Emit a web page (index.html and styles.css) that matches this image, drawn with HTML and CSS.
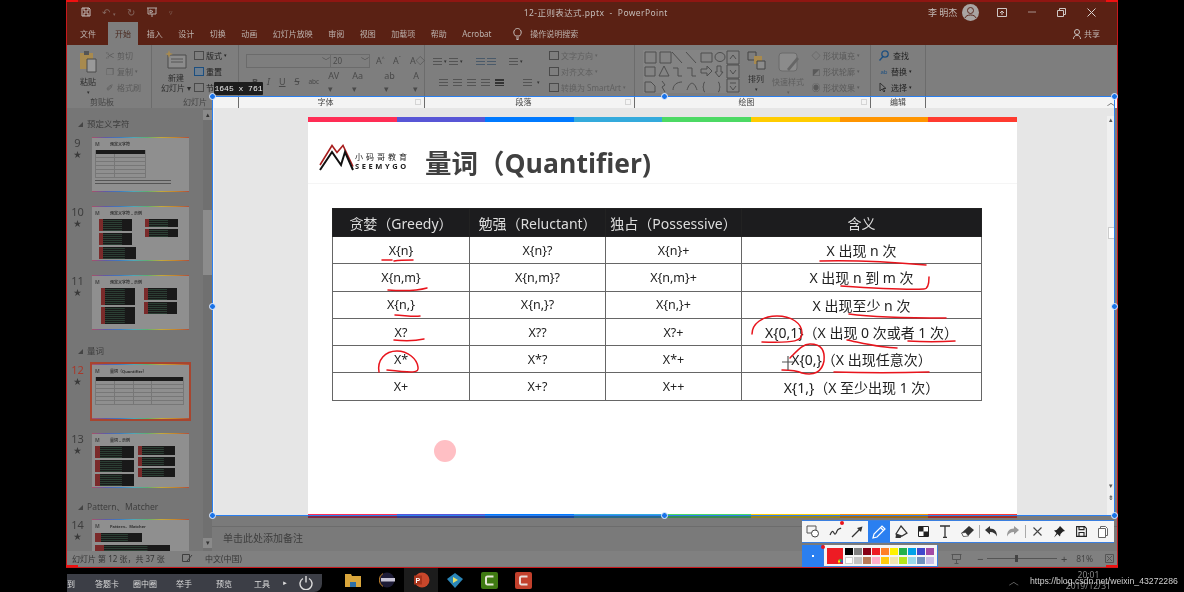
FILE: index.html
```html
<!DOCTYPE HTML>
<html lang="en">
  <head>
    <title>12-正则表达式.pptx - PowerPoint</title>
    <meta charset="utf-8">
    <link rel="stylesheet" href="styles.css">
  </head>
  <body>
  <div class="screen">

    <div class="app">
      <div class="titlebar">
        <div class="quick">
          <svg width="10" height="10" viewBox="0 0 10 10"><path d="M1 1h7l1 1v7H1zM3 1v3h4V1M3 9V6h4v3" fill="none" stroke="#c9c2bf"/></svg>
          <span class="q-undo">↶ <small>▾</small></span>
          <span class="q-redo">↻</span>
          <svg width="12" height="10" viewBox="0 0 12 10"><path d="M1 1h10M2 1v6h8V1M6 7v3M4 3l3 1.5L4 6z" fill="none" stroke="#b5aca8"/></svg>
          <span class="q-drop">▿</span>
        </div>
        <div class="doc-title">12-正则表达式.pptx &nbsp;-&nbsp; PowerPoint</div>
        <div class="account">
          <span class="user">李 明杰</span>
          <svg class="avatar" width="17" height="17" viewBox="0 0 17 17"><circle cx="8.5" cy="8.5" r="8.5" fill="#a9a4a2"/><circle cx="8.5" cy="6.5" r="3" fill="none" stroke="#5b2a20"/><path d="M3 14c1-4 10-4 11 0" fill="none" stroke="#5b2a20"/></svg>
          <svg class="win-btn" width="10" height="9" viewBox="0 0 10 9"><path d="M.5.5h9v8h-9zM3 5l2-2 2 2M5 3v4" fill="none" stroke="#cfc8c5"/></svg>
          <svg class="win-btn" width="8" height="8" viewBox="0 0 8 8"><path d="M0 4h8" stroke="#a5918b"/></svg>
          <svg class="win-btn" width="9" height="9" viewBox="0 0 9 9"><path d="M.5 2.5h6v6h-6zM2.5 2.5v-2h6v6h-2" fill="none" stroke="#cfc8c5"/></svg>
          <svg class="win-btn" width="9" height="9" viewBox="0 0 9 9"><path d="M.5.5l8 8M8.5.5l-8 8" stroke="#d8d2cf"/></svg>
        </div>
      </div>

      <div class="tabs">
        <span class="tab tab-file">文件</span>
        <span class="tab active">开始</span>
        <span class="tab">插入</span>
        <span class="tab">设计</span>
        <span class="tab">切换</span>
        <span class="tab">动画</span>
        <span class="tab">幻灯片放映</span>
        <span class="tab">审阅</span>
        <span class="tab">视图</span>
        <span class="tab">加载项</span>
        <span class="tab">帮助</span>
        <span class="tab">Acrobat</span>
        <svg class="bulb" width="9" height="12" viewBox="0 0 9 12"><path d="M2.5 8C-1 4.500 1.500 .5 4.500 .5S10 4.500 6.500 8zM3 10h3M3.500 11.500h2" fill="none" stroke="#c9c2bf"/></svg>
        <span class="tab search">操作说明搜索</span>
        <span class="share">
          <svg width="9" height="10" viewBox="0 0 9 10"><circle cx="4" cy="3" r="2.500" fill="none" stroke="#c9c2bf"/><path d="M.5 10c0-5 7-5 7 0" fill="none" stroke="#c9c2bf"/></svg>
          共享
        </span>
      </div>

      <div class="ribbon">
        <div class="group g-clip">
          <div class="g-body">
            <div class="big-btn">
              <svg width="18" height="23" viewBox="0 0 18 23"><path d="M1 3h13v16H1z" fill="#a88a4e"/><path d="M5 1h5v4H5z" fill="#555"/><path d="M8 9h9v13H8z" fill="#999" stroke="#4a4a4a"/></svg>
              <span>粘贴</span>
              <small>▾</small>
            </div>
            <div class="stack s-clip faded">
              <span><i class="mini">✂</i>剪切</span>
              <span><i class="mini">❐</i>复制 <small>▾</small></span>
              <span><i class="mini">✐</i>格式刷</span>
            </div>
          </div>
          <div class="g-label">剪贴板</div>
        </div>

        <div class="group g-slides">
          <div class="g-body">
            <div class="big-btn new-slide">
              <svg width="22" height="19" viewBox="0 0 22 19"><path d="M3 5h18v13H3z" fill="#8b8b8b" stroke="#4a4a4a"/><path d="M6 9h12M6 12h12" stroke="#555"/><path d="M4 0l1 3 3 1-3 1-1 3-1-3-3-1 3-1z" fill="#a88a4e"/></svg>
              <span>新建</span>
              <span>幻灯片 ▾</span>
            </div>
            <div class="stack s-slides">
              <span><i class="box"></i>版式 <small>▾</small></span>
              <span><i class="box box-blue"></i>重置</span>
              <span><i class="box"></i>节</span>
            </div>
          </div>
          <div class="g-label label-split">幻灯片</div>
        </div>

        <div class="group g-font">
          <div class="g-body g-col">
            <div class="font-row">
              <div class="combo c-font">﹀</div>
              <div class="combo c-size"><span>20</span>﹀</div>
              <span class="f-btn">A<sup>^</sup></span>
              <span class="f-btn">A<sup>ˇ</sup></span>
              <span class="f-btn">A◇</span>
            </div>
            <div class="font-row row-2">
              <b>B</b><i>I</i><u>U</u><s>S</s><span class="abc">abc</span><span>AV ▾</span><span>Aa ▾</span><span class="pen">ab ▾</span><span class="big-a">A ▾</span>
            </div>
          </div>
          <div class="g-label g-launch">字体<i class="launch"></i></div>
        </div>

        <div class="group g-para">
          <div class="g-body">
            <div class="para-left">
              <div class="para-row">
                <i class="lines"></i><small>▾</small><i class="lines"></i><small>▾</small><i class="sp"></i><i class="lines blue"></i><i class="lines blue"></i><i class="sp"></i><i class="lines"></i><small>▾</small>
              </div>
              <div class="para-row row-b">
                <i class="lines"></i><i class="lines"></i><i class="lines"></i><i class="lines"></i><i class="lines dark"></i><i class="sp"></i><i class="lines"></i><small>▾</small>
              </div>
            </div>
            <div class="stack s-para faded">
              <span><i class="box"></i>文字方向 <small>▾</small></span>
              <span><i class="box"></i>对齐文本 <small>▾</small></span>
              <span><i class="box"></i>转换为 SmartArt <small>▾</small></span>
            </div>
          </div>
          <div class="g-label g-launch">段落<i class="launch"></i></div>
        </div>

        <div class="group g-draw">
          <div class="g-body">
            <svg class="gallery" width="97" height="43" viewBox="0 0 97 43">
              <rect width="97" height="43" fill="#848484"/>
              <g fill="none" stroke="#4e4e4e">
                <path d="M2 2h11v11H2zM17 2h11v11H17zM29 2l10 11M43 2l10 11M58 3h11v9H58z"/><ellipse cx="77" cy="7" rx="5" ry="4.500"/>
                <path d="M2 17h10v9H2zM21 16l5 10H16zM30 18h5v8h4M44 18h5v8h4M58 19h6v-3l5 5-5 5v-3h-6zM74 16h4v6h2l-4 5-4-5h2z"/>
                <path d="M2 32h6l4 4v6H2zM19 31l3 4-3 2 3 5M30 40c0-5 4-8 9-8M44 40c3-9 7-9 10 0M62 32c-2 0-1 4-2 5 1 1 0 5 2 5M75 32c2 0 1 4 2 5-1 1 0 5-2 5"/>
                <path d="M84 1h12v13H84zM84 15h12v13H84zM84 29h12v13H84zM87 9l3-4 3 4M87 20l3 4 3-4M87 33h6M87 36l3 4 3-4"/>
              </g>
            </svg>
            <div class="big-btn arrange">
              <svg width="19" height="19" viewBox="0 0 19 19"><path d="M1 1h8v8H1z" fill="none" stroke="#444"/><path d="M7 5h8v8H7z" fill="#a88a4e"/><path d="M10 10h8v8h-8z" fill="#8b8b8b" stroke="#444"/></svg>
              <span>排列</span>
              <small>▾</small>
            </div>
            <div class="big-btn quick-style faded">
              <svg width="21" height="21" viewBox="0 0 21 21"><rect x="1" y="1" width="18" height="18" rx="3" fill="#8b8b8b" stroke="#6a6a6a"/><path d="M9 17l10-12 2 2-10 12z" fill="#666"/></svg>
              <span>快速样式</span>
              <small>▾</small>
            </div>
            <div class="stack s-draw faded">
              <span><i class="mini">◇</i>形状填充 <small>▾</small></span>
              <span><i class="mini">◩</i>形状轮廓 <small>▾</small></span>
              <span><i class="mini">◉</i>形状效果 <small>▾</small></span>
            </div>
          </div>
          <div class="g-label g-launch">绘图<i class="launch"></i></div>
        </div>

        <div class="group g-edit">
          <div class="g-body">
            <div class="stack s-edit">
              <span><svg width="10" height="11" viewBox="0 0 10 11"><circle cx="6" cy="4" r="3.200" fill="none" stroke="#1c4f80" stroke-width="1.300"/><path d="M4 6.500L.5 10.500" stroke="#1c4f80" stroke-width="1.300"/></svg>查找</span>
              <span><i class="mini ab">ab</i>替换 <small>▾</small></span>
              <span><svg width="8" height="11" viewBox="0 0 8 11"><path d="M1 1v8l2-2 2 3 1-1-2-2.500h3z" fill="none" stroke="#333"/></svg>选择 <small>▾</small></span>
            </div>
          </div>
          <div class="g-label">编辑</div>
        </div>

        <div class="group g-rest">
          <div class="g-body"></div>
          <div class="g-label"><span class="collapse">︿</span></div>
        </div>
      </div>

      <div class="main">
        <div class="pane">
          <div class="pane-list">
            <div class="section"><i></i>预定义字符</div>
            <div class="item">
              <div class="num">9<span>★</span></div>
              <div class="thumb">
                <div class="t-head"><em>M</em>预定义字符</div>
                <div class="t-table"></div>
                <div class="t-note"></div>
              </div>
            </div>
            <div class="item">
              <div class="num">10<span>★</span></div>
              <div class="thumb">
                <div class="t-head"><em>M</em>预定义字符 – 示例</div>
                <div class="t-code">
                  <div class="t-col"><i class="c-a"></i><i class="c-a"></i><i class="c-b"></i></div>
                  <div class="t-col"><i class="c-c"></i><i class="c-c"></i></div>
                </div>
              </div>
            </div>
            <div class="item">
              <div class="num">11<span>★</span></div>
              <div class="thumb">
                <div class="t-head"><em>M</em>预定义字符 – 示例</div>
                <div class="t-code t-wide">
                  <div class="t-col"><i class="c-d"></i><i class="c-d"></i></div>
                  <div class="t-col"><i class="c-e"></i><i class="c-e"></i></div>
                </div>
              </div>
            </div>
            <div class="section"><i></i>量词</div>
            <div class="item current">
              <div class="num">12<span>★</span></div>
              <div class="thumb">
                <div class="t-head"><em>M</em>量词（Quantifier）</div>
                <div class="t-table t-table-wide"></div>
              </div>
            </div>
            <div class="item">
              <div class="num">13<span>★</span></div>
              <div class="thumb">
                <div class="t-head"><em>M</em>量词 – 示例</div>
                <div class="t-code t-thirteen">
                  <div class="t-col"><i class="c-f"></i><i class="c-f"></i><i class="c-f"></i></div>
                  <div class="t-col"><i class="c-g"></i><i class="c-g"></i><i class="c-g"></i></div>
                </div>
              </div>
            </div>
            <div class="section sec-last"><i></i>Pattern、Matcher</div>
            <div class="item">
              <div class="num">14<span>★</span></div>
              <div class="thumb">
                <div class="t-head"><em>M</em>Pattern、Matcher</div>
                <div class="t-code t-col-one"><i class="c-h"></i><i class="c-i"></i></div>
              </div>
            </div>
          </div>
          <div class="pane-scroll">
            <span class="sb-btn">▴</span>
            <span class="sb-thumb"></span>
            <span class="sb-btn sb-down">▾</span>
          </div>
        </div>

        <div class="work">
          <div class="edit">
            <div class="slide">
              <div class="rainbow"></div>
              <div class="slide-head">
                <div class="logo">
                  <svg width="35" height="27" viewBox="0 0 35 27">
                    <path d="M1 21L13 1.500l5 7 6-7 10 21" fill="none" stroke="#a81e1e" stroke-width="1.600"/>
                    <path d="M1 26L13 8l9 13 4-13 8 18" fill="none" stroke="#111" stroke-width="2"/>
                  </svg>
                  <div class="logo-text">
                    <span class="logo-cn">小码哥教育</span>
                    <span class="logo-en">SEEMYGO</span>
                  </div>
                </div>
                <h1>量词（Quantifier)</h1>
              </div>
              <table class="quant">
                <tr><th>贪婪（Greedy）</th><th>勉强（Reluctant）</th><th>独占（Possessive）</th><th>含义</th></tr>
                <tr><td>X{n}</td><td>X{n}?</td><td>X{n}+</td><td>X 出现 n 次</td></tr>
                <tr><td>X{n,m}</td><td>X{n,m}?</td><td>X{n,m}+</td><td>X 出现 n 到 m 次</td></tr>
                <tr><td>X{n,}</td><td>X{n,}?</td><td>X{n,}+</td><td>X 出现至少 n 次</td></tr>
                <tr><td>X?</td><td>X??</td><td>X?+</td><td>X{0,1}（X 出现 0 次或者 1 次）</td></tr>
                <tr><td>X*</td><td>X*?</td><td>X*+</td><td>X{0,}（X 出现任意次）</td></tr>
                <tr><td>X+</td><td>X+?</td><td>X++</td><td>X{1,}（X 至少出现 1 次）</td></tr>
              </table>
              <div class="rainbow rainbow-foot"></div>
            </div>
            <div class="edit-scroll">
              <span>▴</span>
              <i></i>
              <span class="es-down">▾</span>
              <span>⇟</span>
            </div>
          </div>
          <div class="rainbow-dim"></div>
          <div class="notes">单击此处添加备注</div>
        </div>
      </div>

      <div class="status">
        <span class="st-count">幻灯片 第 12 张，共 37 张</span>
        <svg class="st-spell" width="11" height="9" viewBox="0 0 11 9"><path d="M.5.5h7v7h-7zM5 7l5-6" fill="none" stroke="#3e3e3e"/></svg>
        <span class="st-lang">中文(中国)</span>
        <div class="st-right">
          <svg width="11" height="9" viewBox="0 0 11 9"><path d="M.5.5h4.500l.5 1 .5-1h4.500v8h-10zM5.500 1v8" fill="none" stroke="#555"/></svg>
          <svg class="st-show" width="11" height="10" viewBox="0 0 11 10"><path d="M.5.5h10M1.500.5v5h8v-5M5.500 5.500v4M3.500 9.500h4" fill="none" stroke="#555"/></svg>
          <span class="zoom-btn">−</span>
          <div class="zoom-track"><i></i></div>
          <span class="zoom-btn">+</span>
          <span class="zoom-val">81%</span>
          <svg width="9" height="9" viewBox="0 0 9 9"><path d="M.5.500h8v8h-8zM2 2l5 5M7 2L2 7" fill="none" stroke="#555"/></svg>
        </div>
      </div>
    </div>

    <div class="taskbar">
      <div class="class-tools">
        <span class="ct-cut">到</span>
        <span class="ct-card">答题卡</span>
        <span class="ct-ring">圈中圈</span>
        <span class="ct-hand">举手</span>
        <span class="ct-view">预览</span>
        <span class="ct-tool">工具</span>
        <span class="ct-play">►</span>
        <svg width="14" height="14" viewBox="0 0 14 14"><path d="M4 2.500a6 6 0 1 0 6 0M7 0v6.500" fill="none" stroke="#ddd" stroke-width="1.400"/></svg>
      </div>
      <div class="apps">
        <span class="app-icon"><svg width="16" height="14" viewBox="0 0 16 14"><path d="M0 1h6l1 2h9v11H0z" fill="#d9a63c"/><path d="M5 9h6v5H5z" fill="#2d6fa8"/></svg></span>
        <span class="app-icon"><svg width="17" height="16" viewBox="0 0 17 16"><circle cx="8" cy="8" r="7.500" fill="#1d1b36"/><path d="M4 1.500a7.500 7.500 0 0 0 0 13" fill="none" stroke="#c9862c"/><path d="M2 6h14v3.500H2z" fill="#c9c6d8"/></svg></span>
        <span class="app-icon on"><svg width="17" height="16" viewBox="0 0 17 16"><circle cx="9" cy="8" r="7.500" fill="#c9472b"/><path d="M1 3.500h8v9H1z" fill="#a8341c"/><text x="2.500" y="11" font-size="7" font-family="Liberation Sans" font-weight="bold" fill="#fff">P</text></svg></span>
        <span class="app-icon"><svg width="16" height="15" viewBox="0 0 16 15"><path d="M8 0l8 6-8 9-8-9z" fill="#2b86b8"/><path d="M6 4l5 3-5 3z" fill="#e7e36b"/></svg></span>
        <span class="app-icon"><svg width="17" height="17" viewBox="0 0 17 17"><rect width="17" height="17" rx="2" fill="#3f7a12"/><path d="M12.500 4.500h-6a1.500 1.500 0 0 0-1.500 1.500v5a1.500 1.500 0 0 0 1.500 1.500h6" fill="none" stroke="#e7e7d8" stroke-width="2"/></svg></span>
        <span class="app-icon"><svg width="17" height="17" viewBox="0 0 17 17"><rect width="17" height="17" rx="2" fill="#c2402c"/><path d="M12.500 4.500h-6a1.500 1.500 0 0 0-1.500 1.500v5a1.500 1.500 0 0 0 1.500 1.500h6" fill="none" stroke="#eadcd8" stroke-width="2"/></svg></span>
      </div>
      <div class="tray">
        <span class="tray-up">︿</span>
        <div class="clock"><span>20:01</span><span>2019/12/31</span></div>
      </div>
    </div>

    <!-- things drawn on top of the captured screen -->
    <div class="size-tip">1645 x 761</div>
    <div class="selection">
      <i class="h h-tl"></i><i class="h h-tc"></i><i class="h h-tr"></i>
      <i class="h h-ml"></i><i class="h h-mr"></i>
      <i class="h h-bl"></i><i class="h h-bc"></i><i class="h h-br"></i>
    </div>
    <i class="corner c1"></i><i class="corner c2"></i><i class="corner c3"></i><i class="corner c4"></i>

    <svg class="ink" width="1184" height="592" viewBox="0 0 1184 592">
      <g fill="none" stroke="#e8141c" stroke-width="1.500" stroke-linecap="round">
        <path d="M382 260l10 0M394 261c6-1 13-1 19-1"/>
        <path d="M388 290c14 1 28 1 39-2"/>
        <path d="M395 315c8 0 17 2 25 1"/>
        <path d="M394 340c10 1 21 1 30-1"/>
        <path d="M379 372c-2-12 6-21 18-21 11 0 20 8 21 16 1 6-4 6-31 3"/>
        <path d="M820 261c36-1 72 1 106 4"/>
        <path d="M841 286c30 2 60 4 83 3 4 0 5-6 5-12"/>
        <path d="M849 314c30 4 64 4 97 4"/>
        <path d="M752 334c0-10 10-18 25-18 14 0 25 7 25 17 0 8-6 10-40 9"/>
        <path d="M847 340c15 3 34 8 50 8"/>
        <path d="M908 341c15 1 32 1 47 0"/>
        <path d="M782 370c8 0 14 0 20 3 12 3 20-1 22-12 1-10-2-17-14-17-7 0-12 6-20 14"/>
        <path d="M834 372c32 1 64 1 95 0"/>
      </g>
      <path d="M782 362h11M788 356v14" fill="none" stroke="#555" stroke-width="1.200"/>
      <circle cx="445" cy="451" r="11" fill="#ffbfc4"/>
    </svg>

    <div class="draw-bar">
      <div class="tool"><svg width="14" height="13" viewBox="0 0 14 13"><path d="M1 1h9v7H1z" fill="none" stroke="#555"/><circle cx="9" cy="8.500" r="3.500" fill="#fff" stroke="#444"/></svg></div>
      <div class="tool t-dot"><svg width="13" height="10" viewBox="0 0 13 10"><path d="M1 8c2-5 3-4 4-2s2 1 3-2 3-2 4-3" fill="none" stroke="#333" stroke-width="1.200"/></svg></div>
      <div class="tool"><svg width="12" height="12" viewBox="0 0 12 12"><path d="M1 11L9 3" stroke="#333" stroke-width="1.300"/><path d="M11.500.5L10 6 6 2z" fill="#333"/></svg></div>
      <div class="tool tool-on"><svg width="14" height="14" viewBox="0 0 14 14"><path d="M1 13l1-4 8-8 3 3-8 8zM8.500 2.500l3 3" fill="none" stroke="#fff" stroke-width="1.200"/></svg></div>
      <div class="tool"><svg width="13" height="14" viewBox="0 0 13 14"><path d="M6 1l6 7-5 3-6-2z" fill="none" stroke="#333" stroke-width="1.200"/><path d="M1 9l-.5 4h5L7 11z" fill="#333"/></svg></div>
      <div class="tool"><svg width="11" height="11" viewBox="0 0 11 11"><path d="M.5.500h10v10H.500z" fill="#fff" stroke="#222"/><path d="M1 1h4.500v4.500H1zM5.500 5.500H10V10H5.500z" fill="#222"/></svg></div>
      <div class="tool"><svg width="12" height="13" viewBox="0 0 12 13"><path d="M1 1h10M6 1v12M4 12.500h4" fill="none" stroke="#333" stroke-width="1.300"/></svg></div>
      <div class="tool"><svg width="13" height="11" viewBox="0 0 13 11"><path d="M8 0l5 4-6 6-5 .5L.500 7z" fill="#333"/><path d="M.500 7l4-.5 3 3.500-5 .5z" fill="#fff" stroke="#333" stroke-width=".6"/></svg></div>
      <i class="tool-sep"></i>
      <div class="tool"><svg width="12" height="11" viewBox="0 0 12 11"><path d="M0 4l5-4v2.500c5 0 7 3 7 8-1.500-3-3.500-4.500-7-4.500V8.500z" fill="#333"/></svg></div>
      <div class="tool tool-off"><svg width="12" height="11" viewBox="0 0 12 11"><path d="M12 4L7 0v2.500c-5 0-7 3-7 8 1.500-3 3.500-4.500 7-4.500V8.500z" fill="#999"/></svg></div>
      <i class="tool-sep"></i>
      <div class="tool"><svg width="9" height="9" viewBox="0 0 9 9"><path d="M.5.500l8 8M8.500.500l-8 8" stroke="#444" stroke-width="1.100"/></svg></div>
      <div class="tool"><svg width="12" height="12" viewBox="0 0 12 12"><path d="M7 0l5 5-2 .5-2.500 2.500-.5 2.500-2.500-2.500L1 11.500 3.500 7 1 4.500 3.500 4 6 1.500z" fill="#222"/></svg></div>
      <div class="tool"><svg width="11" height="11" viewBox="0 0 11 11"><path d="M.6.600h8l1.800 1.800v8H.6zM3 .6v3h5v-3M3 10.400V6.500h5v3.900" fill="none" stroke="#222" stroke-width="1.100"/></svg></div>
      <div class="tool"><svg width="10" height="12" viewBox="0 0 10 12"><path d="M2.500 2.500V.5h5l2 2v7h-2M.5 2.500h7v9h-7z" fill="#fff" stroke="#666"/></svg></div>
    </div>
    <div class="color-bar">
      <div class="pen-size"><i></i></div>
      <div class="palette">
        <div class="current-color"><i></i></div>
        <div class="swatches">
          <i class="s01"></i><i class="s02"></i><i class="s03"></i><i class="s04"></i><i class="s05"></i><i class="s06"></i><i class="s07"></i><i class="s08"></i><i class="s09"></i><i class="s10"></i>
          <i class="s11"></i><i class="s12"></i><i class="s13"></i><i class="s14"></i><i class="s15"></i><i class="s16"></i><i class="s17"></i><i class="s18"></i><i class="s19"></i><i class="s20"></i>
        </div>
      </div>
    </div>

    <div class="watermark">https://blog.csdn.net/weixin_43272286</div>
  </div>
  </body>
</html>
```

FILE: styles.css
```css
html, body {
  margin: 0;
  padding: 0;
  background: #000;
}
body {
  font-family: "Noto Sans", "Noto Sans CJK SC", sans-serif;
  font-size: 8px;
  color: #333;
}
svg {
  display: block;
  flex: none;
}
small {
  font-size: 5px;
}

.screen {
  position: relative;
  width: 1184px;
  height: 592px;
  overflow: hidden;
  background: #000;
  filter: blur(0.4px);
}

/* window */
.app {
  width: 1050px;
  height: 565px;
  margin-left: 66px;
  border: 1px solid #c9181c;
  border-top: 2px solid #8f1612;
  background: #7a7a7a;
}
.titlebar {
  display: flex;
  align-items: center;
  height: 20px;
  background: #5a2114;
  color: #c4bcb8;
}
.quick {
  display: flex;
  align-items: center;
  width: 300px;
  padding-left: 14px;
  gap: 11px;
  color: #84675f;
  font-size: 10px;
  box-sizing: border-box;
}
.q-drop {
  font-size: 7px;
}
.doc-title {
  width: 330px;
  margin-left: 174px;
  font-size: 8.5px;
  letter-spacing: .4px;
  white-space: nowrap;
}
.account {
  display: flex;
  align-items: center;
  margin-left: 94px;
}
.user {
  width: 34px;
  font-size: 9px;
  white-space: nowrap;
}
.avatar {
  margin-right: 18px;
}
.win-btn {
  margin-right: 21px;
}

.tabs {
  display: flex;
  align-items: center;
  height: 23px;
  background: #5a2114;
  color: #bdb3ae;
}
.tab {
  padding: 0 7.75px;
  line-height: 23px;
}
.tab-file {
  padding: 0 12px 0 13px;
}
.tab.active {
  width: 16px;
  padding: 0 7px;
  margin-right: 1px;
  background: #7e7e7e;
  color: #4a2a20;
}
.bulb {
  margin: 0 4px 0 14px;
}
.search {
  padding-left: 4px;
}
.share {
  display: flex;
  align-items: center;
  gap: 2px;
  margin-left: auto;
  margin-right: 17px;
}

/* ribbon */
.ribbon {
  display: flex;
  height: 63px;
  background: #7e7e7e;
}
.group {
  display: flex;
  flex-direction: column;
  flex: none;
  box-sizing: border-box;
  border-right: 1px solid #6c6c6c;
}
.g-clip { width: 85px; }
.g-slides { width: 87px; }
.g-font { width: 186px; }
.g-para { width: 210px; }
.g-draw { width: 236px; }
.g-edit { width: 55px; }
.g-rest { flex: 1; border-right: 0; }
.g-body {
  display: flex;
  height: 51px;
  box-sizing: border-box;
  padding-top: 5px;
}
.g-col {
  flex-direction: column;
  padding-top: 8px;
}
.g-label {
  position: relative;
  height: 12px;
  line-height: 11px;
  text-align: center;
  background: #f4f4f4;
  color: #444;
}
.g-launch {
  padding-right: 12px;
}
.g-clip .g-label {
  background: #7e7e7e;
  padding-right: 14px;
}
.label-split {
  background: linear-gradient(to right, #7e7e7e 60px, #f4f4f4 60px);
}
.launch {
  position: absolute;
  right: 3px;
  top: 3px;
  width: 4px;
  height: 4px;
  border: 1px solid #d5d5d5;
}
.collapse {
  position: absolute;
  right: 2px;
  top: 0;
  color: #555;
}
.faded {
  color: #5a5a5a;
}
.big-btn {
  display: flex;
  flex-direction: column;
  align-items: center;
  line-height: 10px;
  color: #2d2d2d;
}
.big-btn svg {
  margin-bottom: 4px;
}
.g-clip .big-btn {
  margin-left: 12px;
  width: 18px;
}
.big-btn.new-slide {
  margin-left: 8px;
  width: 32px;
  white-space: nowrap;
}
.stack {
  display: flex;
  flex-direction: column;
  gap: 5px;
  line-height: 11px;
  white-space: nowrap;
}
.stack span {
  display: flex;
  align-items: center;
  gap: 2px;
}
.mini {
  display: inline-block;
  width: 10px;
  font-style: normal;
  font-size: 9px;
  line-height: 10px;
  text-align: center;
}
.mini.ab {
  font-size: 6px;
  color: #1c4f80;
}
.box {
  display: inline-block;
  width: 8px;
  height: 7px;
  border: 1px solid #4a4a4a;
}
.box-blue {
  border-color: #1c4f80;
  background: #6f7f8f;
}
.s-clip { margin-left: 8px; }
.s-slides { margin-left: 2px; color: #222; }

.font-row {
  display: flex;
  align-items: center;
  height: 15px;
  padding-left: 7px;
}
.combo {
  height: 14px;
  box-sizing: border-box;
  border: 1px solid #6b6b6b;
  display: flex;
  justify-content: flex-end;
  line-height: 12px;
  color: #4a4a4a;
}
.c-font { width: 85px; }
.c-size {
  width: 39px;
  border-left: 0;
  justify-content: space-between;
  padding-left: 2px;
}
.f-btn {
  margin-left: 6px;
  width: 11px;
  font-size: 9px;
  color: #4a4a4a;
}
.f-btn sup {
  font-size: 5px;
}
.row-2 {
  margin-top: 6px;
  gap: 9px;
  padding-left: 13px;
  font-size: 9px;
  color: #4a4a4a;
}
.row-2 .abc { font-size: 6.500px; }
.row-2 .pen { margin-left: 8px; }
.row-2 .big-a { margin-left: 5px; }

.para-left {
  width: 124px;
  padding: 5px 0 0 8px;
  box-sizing: border-box;
}
.para-row {
  display: flex;
  align-items: center;
  gap: 2px;
  height: 12px;
}
.row-b {
  margin-top: 9px;
  gap: 5px;
  padding-left: 6px;
}
.lines {
  width: 9px;
  height: 7px;
  background: repeating-linear-gradient(#545454 0 1px, transparent 1px 3px);
}
.lines.blue {
  background: repeating-linear-gradient(#4a5a6a 0 1px, transparent 1px 3px);
}
.lines.dark {
  background: repeating-linear-gradient(#333 0 2px, transparent 2px 3px);
}
.sp { width: 9px; }
.s-para { color: #606060; }

.gallery { margin: 0 6px 0 8px; }
.arrange {
  width: 20px;
  margin-right: 5px;
}
.arrange svg { margin-top: 1px; }
.quick-style {
  width: 34px;
  margin-right: 6px;
  color: #5f5f5f;
  white-space: nowrap;
}
.quick-style svg { margin-top: 2px; }
.s-edit {
  margin-left: 8px;
  color: #222;
}
.s-edit svg { margin-right: 2px; }

/* slide list */
.main {
  display: flex;
  height: 443px;
}
.pane {
  display: flex;
  width: 145px;
  flex: none;
  overflow: hidden;
  background: #767676;
}
.pane-list {
  width: 136px;
  padding-top: 9px;
  overflow: hidden;
}
.pane-scroll {
  display: flex;
  flex-direction: column;
  width: 9px;
  background: #707070;
}
.sb-btn {
  height: 10px;
  margin-top: 2px;
  line-height: 10px;
  text-align: center;
  font-size: 7px;
  color: #333;
  background: #8a8a8a;
}
.sb-thumb {
  height: 65px;
  margin-top: 90px;
  background: #8c8c8c;
}
.sb-down {
  margin-top: auto;
  margin-bottom: 3px;
}
.section {
  display: flex;
  align-items: center;
  height: 14px;
  margin-bottom: 6px;
  padding-left: 11px;
  font-size: 8.500px;
  line-height: 14px;
  color: #3e3e3e;
  white-space: nowrap;
}
.sec-last {
  margin-top: -2px;
  margin-bottom: 5px;
}
.section i {
  width: 0;
  height: 0;
  margin-right: 4px;
  border-left: 5px solid transparent;
  border-bottom: 5px solid #444;
}
.item {
  display: flex;
  margin-bottom: 14px;
}
.num {
  display: flex;
  flex-direction: column;
  align-items: center;
  width: 25px;
  padding-right: 4px;
  box-sizing: border-box;
  font-size: 11px;
  line-height: 12px;
  color: #3e3e3e;
}
.num span {
  font-size: 8px;
  line-height: 10px;
  color: #3a3a3a;
}
.current .num {
  color: #a8382a;
}
.current .num span {
  color: #3a3a3a;
}
.thumb {
  width: 97px;
  height: 55px;
  box-sizing: border-box;
  padding: 2px 3px 0;
  overflow: hidden;
  background:
    linear-gradient(to right, #a85068, #5d5ca8, #3c7ac0, #4fa6b8, #5eb070, #c4a93c, #c4862c, #b0503c) top/100% 1px no-repeat,
    linear-gradient(to right, #a85068, #5d5ca8, #3c7ac0, #4fa6b8, #5eb070, #c4a93c, #c4862c, #b0503c) bottom/100% 1px no-repeat,
    #8f8f8f;
}
.current .thumb {
  outline: 2px solid #a8452f;
  outline-offset: 0;
}
.t-head {
  display: flex;
  align-items: center;
  gap: 3px;
  height: 10px;
  font-size: 4px;
  font-weight: bold;
  color: #333;
  white-space: nowrap;
}
.t-head em {
  font-style: normal;
  font-size: 5px;
  color: #4a4a4a;
  width: 12px;
}
.t-table {
  width: 51px;
  height: 28px;
  margin: 1px 0 0;
  border: 1px solid #777;
  border-top: 0;
  box-sizing: border-box;
  background:
    linear-gradient(#1a1a1a, #1a1a1a) top/100% 4px no-repeat,
    linear-gradient(#777, #777) 18px 0/1px 100% no-repeat,
    repeating-linear-gradient(transparent 0 3px, #777 3px 4px);
}
.t-table-wide {
  width: 89px;
  height: 28px;
  background:
    linear-gradient(#1a1a1a, #1a1a1a) top/100% 4px no-repeat,
    linear-gradient(#777, #777) 18px 0/1px 100% no-repeat,
    linear-gradient(#777, #777) 37px 0/1px 100% no-repeat,
    linear-gradient(#777, #777) 55px 0/1px 100% no-repeat,
    repeating-linear-gradient(transparent 0 3px, #777 3px 4px);
}
.t-note {
  width: 76px;
  height: 5px;
  margin-top: 2px;
  background: repeating-linear-gradient(#555 0 1px, transparent 1px 3px);
}
.t-code {
  display: flex;
  gap: 9px;
  padding: 1px 0 0 4px;
}
.t-col {
  display: flex;
  flex-direction: column;
  gap: 2px;
}
.t-code i {
  display: block;
  background:
    linear-gradient(to right, #7a2a2a 0 12%, transparent 12%) 0 0/100% 100% no-repeat,
    repeating-linear-gradient(transparent 0 1px, rgba(90,160,120,.28) 1px 2px) 0 0/70% 100% no-repeat,
    #191919;
}
.c-a { width: 33px; height: 12px; }
.c-b { width: 37px; height: 12px; }
.c-c { width: 33px; height: 8px; }
.c-d { width: 34px; height: 17px; }
.c-e { width: 33px; height: 12px; }
.c-f { width: 39px; height: 12px; }
.c-g { width: 37px; height: 9px; }
.c-h { width: 47px; height: 9px; }
.c-i { width: 75px; height: 12px; }
.t-wide { padding-left: 6px; }
.t-thirteen { padding-left: 0; gap: 4px; }
.t-col-one {
  flex-direction: column;
  gap: 3px;
  padding: 2px 0 0;
}

/* slide editor */
.work {
  display: flex;
  flex-direction: column;
  flex: 1;
  min-width: 0;
}
.edit {
  display: flex;
  height: 408px;
  margin-right: 2px;
  box-sizing: border-box;
  padding-top: 9px;
  border-left: 2px solid #f2f2f2;
  background: #e6e6e6;
}
.slide {
  display: flex;
  flex-direction: column;
  width: 709px;
  margin-left: 94px;
  background: #fff;
}
.rainbow {
  flex: none;
  height: 5px;
  background: linear-gradient(to right,
    #ff2d55 0 12.500%, #5856d6 12.500% 25%, #007aff 25% 37.500%, #34aadc 37.500% 50%,
    #4cd964 50% 62.500%, #ffcc00 62.500% 75%, #ff9500 75% 87.500%, #ff3b30 87.500% 100%);
}
.rainbow-foot {
  height: 2px;
  margin-top: auto;
}
.slide-head {
  display: flex;
  align-items: flex-end;
  height: 62px;
  box-sizing: border-box;
  padding-bottom: 2px;
  border-bottom: 1px solid #f5f5f5;
}
.logo {
  display: flex;
  align-items: flex-end;
  width: 117px;
  padding: 0 0 10px 11px;
  box-sizing: border-box;
}
.logo-text {
  display: flex;
  flex-direction: column;
  margin-left: 1px;
}
.logo-cn {
  font-size: 8px;
  line-height: 10px;
  color: #222;
  letter-spacing: 3px;
  white-space: nowrap;
}
.logo-en {
  font-size: 7.500px;
  line-height: 9px;
  font-weight: bold;
  letter-spacing: 2.600px;
  color: #222;
}
.slide-head h1 {
  margin: 0;
  font-family: "Open Sans", "Noto Sans CJK SC", sans-serif;
  font-size: 26.500px;
  font-weight: 700;
  line-height: 36px;
  color: #404040;
  white-space: nowrap;
}
.quant {
  width: 650px;
  margin: 24px 0 0 24px;
  table-layout: fixed;
  border-collapse: collapse;
  font-size: 12.500px;
  color: #222;
  text-align: center;
}
.quant th {
  height: 27px;
  padding: 0;
  border: 1px solid #222;
  background: #1c1c1e;
  font-size: 14px;
  font-weight: 400;
  color: #ddd;
}
.quant th:nth-child(1) {
  width: 136px;
}
.quant th:nth-child(2), .quant th:nth-child(3) {
  width: 135px;
}
.quant td {
  height: 26.300px;
  padding: 0;
  border: 1.500px solid #666;
}
.quant td:last-child {
  font-size: 14px;
}
.edit-scroll {
  display: flex;
  flex-direction: column;
  align-items: center;
  width: 8px;
  margin-left: auto;
  font-size: 7px;
  line-height: 8px;
  color: #555;
  background: #f0f0f0;
  margin-top: -1px;
}
.edit-scroll i {
  width: 7px;
  height: 12px;
  margin-top: 103px;
  background: #fff;
  border: 1px solid #ccc;
  box-sizing: border-box;
}
.es-down {
  margin-top: auto;
}
.edit-scroll span:last-child {
  margin-bottom: 14px;
  margin-top: 4px;
}
.rainbow-dim {
  height: 2px;
  margin-left: 96px;
  width: 709px;
  background: linear-gradient(to right, #7f2a45 0 12.500%, #3a3a8a 12.500% 25%, #184a9a 25% 37.500%, #2a6a88 37.500% 50%, #3a8a50 50% 62.500%, #9a8420 62.500% 75%, #a06a18 75% 87.500%, #a03028 87.500% 100%);
}
.notes {
  flex: 1;
  margin-top: 8px;
  padding-left: 11px;
  border-top: 1px solid #6c6c6c;
  font-size: 10px;
  line-height: 23px;
  color: #3e3e3e;
}

.status {
  display: flex;
  align-items: center;
  height: 15px;
  padding-left: 5px;
  background: #808080;
  color: #353535;
}
.st-count { width: 110px; }
.st-lang { margin-left: 12px; }
.st-right {
  display: flex;
  align-items: center;
  margin-left: auto;
  margin-right: 3px;
}
.st-show { margin: 0 14px; }
.zoom-btn {
  width: 8px;
  font-size: 11px;
  line-height: 11px;
  text-align: center;
  color: #444;
}
.zoom-track {
  position: relative;
  width: 70px;
  height: 1px;
  margin: 0 3px;
  background: #555;
}
.zoom-track i {
  position: absolute;
  left: 28px;
  top: -3px;
  width: 3px;
  height: 7px;
  background: #444;
}
.zoom-val {
  margin: 0 12px 0 8px;
  color: #444;
  font-size: 8.500px;
}

/* taskbar */
.taskbar {
  display: flex;
  height: 24px;
  margin-left: 67px;
  color: #ddd;
}
.class-tools {
  display: flex;
  align-items: center;
  align-self: flex-end;
  height: 18px;
  width: 255px;
  flex: none;
  box-sizing: border-box;
  background: #3c3e46;
  border-radius: 0 0 8px 0;
  font-size: 8px;
  white-space: nowrap;
}
.class-tools span {
  flex: none;
}
.ct-cut { width: 10px; }
.ct-card { margin-left: 18px; }
.ct-ring { margin-left: 14px; }
.ct-hand { margin-left: 19px; }
.ct-view { margin-left: 24px; }
.ct-tool { margin-left: 22px; }
.ct-play { margin-left: 12px; font-size: 6px; }
.class-tools svg { margin-left: 11px; }
.apps {
  display: flex;
  align-items: center;
  margin-left: 14px;
}
.app-icon {
  display: flex;
  align-items: center;
  justify-content: center;
  width: 34px;
  height: 24px;
}
.app-icon.on {
  background: #1c1c1c;
}
.tray {
  display: flex;
  align-items: center;
  margin-left: auto;
  margin-right: 73px;
  color: #777;
}
.tray-up {
  margin-right: 47px;
  font-size: 10px;
}
.clock {
  display: flex;
  flex-direction: column;
  align-items: center;
  font-size: 8.500px;
  line-height: 11px;
  color: #8a8a8a;
}

/* overlays */
.size-tip {
  position: absolute;
  left: 214px;
  top: 82px;
  width: 49px;
  height: 13px;
  background: #1d1d1d;
  color: #eee;
  font-family: "Liberation Mono", monospace;
  font-size: 8px;
  line-height: 13px;
  text-align: center;
  border-radius: 1px;
}
.selection {
  position: absolute;
  left: 212px;
  top: 96px;
  width: 903px;
  height: 420px;
  box-sizing: border-box;
  border: 1.500px solid #2a7ff0;
}
.h {
  position: absolute;
  width: 5px;
  height: 5px;
  border-radius: 50%;
  background: #1a73e8;
  border: 1px solid #e8f0ff;
}
.h-tl { left: -4px; top: -4px; }
.h-tc { left: 448px; top: -4px; }
.h-tr { right: -4px; top: -4px; }
.h-ml { left: -4px; top: 206px; }
.h-mr { right: -4px; top: 206px; }
.h-bl { left: -4px; bottom: -4px; }
.h-bc { left: 448px; bottom: -4px; }
.h-br { right: -4px; bottom: -4px; }
.corner {
  position: absolute;
  background: #f01010;
}
.c1 { left: 66px; top: 0; width: 12px; height: 2px; }
.c2 { left: 1106px; top: 0; width: 12px; height: 2px; }
.c3 { left: 66px; top: 565px; width: 12px; height: 2px; }
.c4 { left: 1106px; top: 565px; width: 12px; height: 2px; }
.ink {
  position: absolute;
  left: 0;
  top: 0;
}
.draw-bar {
  position: absolute;
  left: 802px;
  top: 520px;
  display: flex;
  align-items: stretch;
  width: 312px;
  height: 23px;
  box-sizing: border-box;
  background: #f5f5f5;
  border: 1px solid #3a7fe0;
  border-width: 1px 0;
}
.tool {
  display: flex;
  align-items: center;
  justify-content: center;
  width: 22px;
  flex: none;
}
.tool-on {
  width: 22px;
  background: #2a7ff0;
}
.t-dot {
  position: relative;
}
.t-dot::after {
  content: "";
  position: absolute;
  right: 2px;
  top: 0;
  width: 4px;
  height: 4px;
  border-radius: 50%;
  background: #e8141c;
}
.tool-sep {
  width: 1px;
  margin: 4px 0.5px;
  background: #aaa;
  flex: none;
}
.color-bar {
  position: absolute;
  left: 802px;
  top: 545px;
  display: flex;
  height: 22px;
}
.pen-size {
  position: relative;
  width: 21px;
  background: #2a7ff0;
}
.pen-size i {
  position: absolute;
  left: 10px;
  top: 10px;
  width: 2px;
  height: 2px;
  background: #fff;
}
.pen-size::after {
  content: "";
  position: absolute;
  right: -2px;
  top: 0;
  width: 4px;
  height: 4px;
  border-radius: 50%;
  background: #e8141c;
}
.palette {
  display: flex;
  gap: 2px;
  width: 115px;
  box-sizing: border-box;
  padding: 3px 0 0 3px;
  background: #f5f5f5;
  border: 1px solid #3a7fe0;
  border-width: 0 1px 1px 1px;
}
.current-color {
  position: relative;
  width: 16px;
  height: 16px;
  background: #ed1c24;
}
.current-color i {
  position: absolute;
  right: 0;
  bottom: 0;
  width: 5px;
  height: 5px;
  border-radius: 50%;
  background: conic-gradient(#22b14c, #3f48cc, #ed1c24, #fff200, #22b14c);
}
.swatches {
  display: grid;
  grid-template-columns: repeat(10, 8px);
  grid-auto-rows: 7px;
  gap: 2px 1px;
}
.s01 { background: #000; }
.s02 { background: #7f7f7f; }
.s03 { background: #880015; }
.s04 { background: #ed1c24; }
.s05 { background: #ff7f27; }
.s06 { background: #fff200; }
.s07 { background: #22b14c; }
.s08 { background: #00a2e8; }
.s09 { background: #3f48cc; }
.s10 { background: #a349a4; }
.s11 { background: #fff; border: 1px solid #ccc; box-sizing: border-box; }
.s12 { background: #c3c3c3; }
.s13 { background: #b97a57; }
.s14 { background: #ffaec9; }
.s15 { background: #ffc90e; }
.s16 { background: #efe4b0; }
.s17 { background: #b5e61d; }
.s18 { background: #99d9ea; }
.s19 { background: #7092be; }
.s20 { background: #c8bfe7; }
.watermark {
  position: absolute;
  left: 1030px;
  top: 575px;
  font-family: "Liberation Sans", sans-serif;
  font-size: 8.700px;
  line-height: 12px;
  color: #d0d0d0;
  white-space: nowrap;
}
```
